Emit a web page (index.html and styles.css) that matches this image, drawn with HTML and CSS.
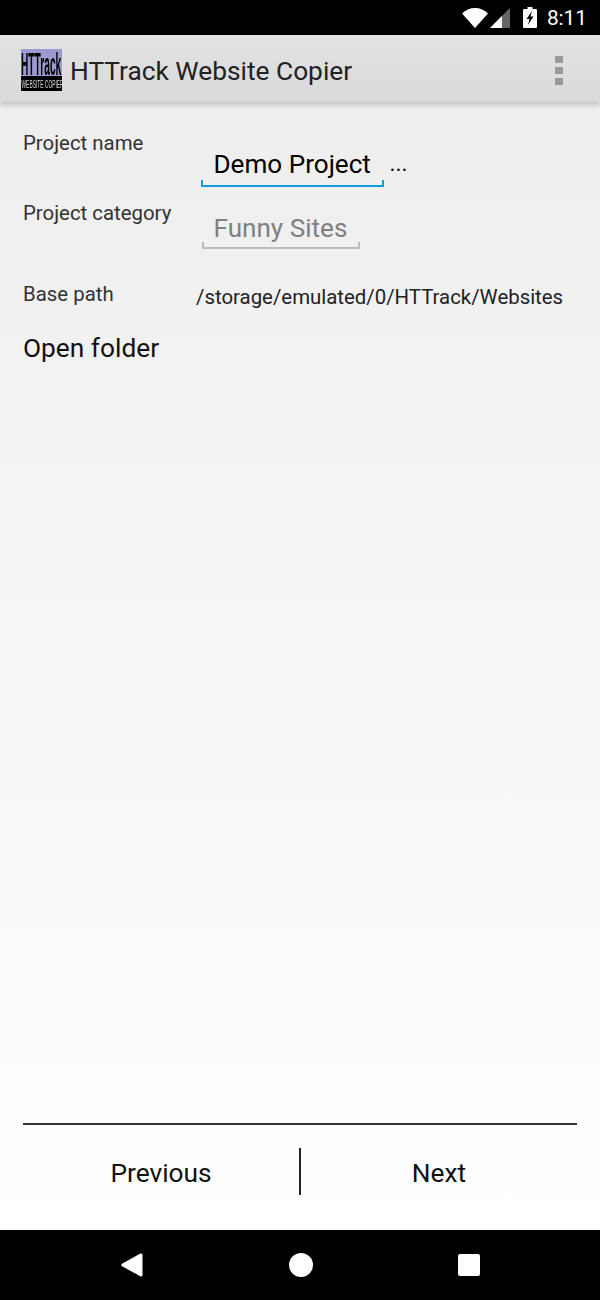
FILE: index.html
```html
<!DOCTYPE html>
<html lang="en">
<head>
    <meta charset="UTF-8">
    <meta name="viewport" content="width=device-width, initial-scale=1.0">
    <title>HTTrack Website Copier</title>
    <link rel="stylesheet" href="styles.css">
</head>
<body>
    <!-- Status bar -->
    <div class="status-bar">
        <svg class="icon-wifi" width="26" height="20" viewBox="0 0 26 20"><path d="M0 5.500C3.500 2 8 0 13 0s9.500 2 13 5.500L13 20z" fill="#fff"/></svg>
        <svg class="icon-signal" width="20" height="20" viewBox="0 0 20 20"><path d="M0 20L20 0v20z" fill="#666"/><path d="M0 20L12 8v12z" fill="#fff"/></svg>
        <svg class="icon-battery" width="14" height="21" viewBox="0 0 14 21"><path d="M4.500 0h5v2H13a1 1 0 0 1 1 1v17a1 1 0 0 1-1 1H1a1 1 0 0 1-1-1V3a1 1 0 0 1 1-1h3.500z" fill="#fff"/><path d="M9 4L3.500 12h3l-1.500 6L10.500 9.500h-3z" fill="#000"/></svg>
        <span class="clock">8:11</span>
    </div>

    <!-- Action bar -->
    <header class="action-bar">
        <svg class="logo" width="41" height="42" viewBox="0 0 41 42">
            <rect width="41" height="42" fill="#9c9ad0"/>
            <rect y="27" width="41" height="15" fill="#000"/>
            <text transform="translate(0 26) scale(1.02 3.1)" font-size="10" font-weight="bold" fill="#000">HTTrack</text>
            <text transform="translate(0.500 38.500) scale(0.98 2)" font-size="5" fill="#ddd">WEBSITE COPIER</text>
        </svg>
        <h1 class="app-title">HTTrack Website Copier</h1>
        <div class="overflow">
            <span></span>
            <span></span>
            <span></span>
        </div>
    </header>

    <main class="content">
        <div class="row row-name">
            <label class="field-label">Project name</label>
            <div class="input input-active">Demo Project</div>
            <span class="dots">...</span>
        </div>
        <div class="row row-category">
            <label class="field-label">Project category</label>
            <div class="input input-hint">Funny Sites</div>
        </div>
        <div class="row row-path">
            <label class="field-label">Base path</label>
            <span class="path">/storage/emulated/0/HTTrack/Websites</span>
        </div>
        <div class="open-folder">Open folder</div>

        <div class="bottom">
            <div class="bottom-line"></div>
            <div class="buttons">
                <div class="btn">Previous</div>
                <div class="btn-sep"></div>
                <div class="btn">Next</div>
            </div>
        </div>
    </main>

    <!-- Navigation bar -->
    <nav class="nav-bar">
        <svg width="22" height="24" viewBox="0 0 22 24"><path d="M20 0.500a1.500 1.500 0 0 1 1.500 1.500v20a1.500 1.500 0 0 1-2.200 1.300L1 13.200a1.500 1.500 0 0 1 0-2.500L19 0.700a1.500 1.500 0 0 1 1-.2z" fill="#fff"/></svg>
        <svg width="24" height="24" viewBox="0 0 24 24"><circle cx="12" cy="12" r="12" fill="#fff"/></svg>
        <svg width="22" height="22" viewBox="0 0 22 22"><rect width="22" height="22" rx="2" fill="#fff"/></svg>
    </nav>
</body>
</html>
```

FILE: styles.css
```css
* {
    box-sizing: border-box;
}
body {
    margin: 0;
    width: 600px;
    height: 1300px;
    display: flex;
    flex-direction: column;
    overflow: hidden;
    font-family: Roboto, "Liberation Sans", sans-serif;
    background-color: #fff;
}

/* Status bar */
.status-bar {
    height: 35px;
    background-color: #000;
    color: #fff;
    display: flex;
    align-items: center;
    justify-content: flex-end;
    padding-right: 13px;
}
.icon-wifi {
    margin-right: 2px;
}
.icon-signal {
    margin-right: 13px;
}
.icon-battery {
    margin-right: 10px;
}
.clock {
    font-size: 20.800px;
}

/* Action bar */
.action-bar {
    height: 67px;
    display: flex;
    align-items: center;
    padding: 3px 0 0 21px;
    background: linear-gradient(#e2e2e2, #dadada);
    box-shadow: 0 3px 5px rgba(0, 0, 0, 0.18);
    position: relative;
}
.logo {
    font-family: "Liberation Sans", sans-serif;
    filter: blur(0.4px);
}
.app-title {
    margin: 2px 0 0 8px;
    font-size: 26.300px;
    font-weight: 400;
    color: #222;
    flex: 1;
}
.overflow {
    width: 8px;
    margin-right: 37px;
    display: flex;
    flex-direction: column;
    gap: 4px;
}
.overflow span {
    height: 7px;
    background-color: #999;
}

/* Form */
.content {
    flex: 1;
    display: flex;
    flex-direction: column;
    padding: 0 23px;
    background: linear-gradient(#eeeeee, #ffffff);
}
.row {
    display: flex;
    align-items: flex-start;
}
.field-label {
    width: 178px;
    font-size: 20.400px;
    color: #333;
    line-height: 24px;
}
.row-name {
    height: 99px;
    padding-top: 29px;
}
.row-category {
    height: 81px;
}
.row-path {
    height: 51px;
}
.input {
    font-size: 26.100px;
    line-height: 30px;
    white-space: nowrap;
    border-bottom: 2px solid;
    position: relative;
}
.input::before,
.input::after {
    content: "";
    position: absolute;
    bottom: 0;
    width: 2px;
    height: 5px;
}
.input::before {
    left: 0;
}
.input::after {
    right: 0;
}
.input-active {
    height: 38px;
    margin-top: 18px;
    padding: 0 13.500px 0 12.500px;
    color: #000;
    border-bottom-color: #0f9ed8;
}
.input-active::before,
.input-active::after {
    background-color: #0f9ed8;
}
.input-hint {
    width: 158px;
    height: 36px;
    margin: 12px 0 0 1px;
    padding-left: 11.500px;
    color: #808080;
    border-bottom-color: #bbb;
}
.input-hint::before,
.input-hint::after {
    background-color: #bbb;
}
.dots {
    font-size: 23px;
    line-height: 30px;
    color: #111;
    margin: 18px 0 0 5px;
}
.path {
    font-size: 20.400px;
    color: #222;
    line-height: 24px;
    margin: 3px 0 0 -5px;
}
.open-folder {
    font-size: 26.300px;
    color: #111;
    line-height: 30px;
}
.bottom {
    margin-top: auto;
}
.bottom-line {
    height: 2px;
    background-color: #333;
}
.buttons {
    height: 105px;
    display: flex;
    align-items: center;
    padding-bottom: 12px;
}
.btn {
    flex: 1;
    text-align: center;
    font-size: 26.300px;
    color: #111;
    padding-top: 2px;
}
.btn-sep {
    width: 2px;
    height: 47px;
    background-color: #222;
}

/* Navigation bar */
.nav-bar {
    height: 70px;
    background-color: #000;
    display: flex;
    align-items: center;
    justify-content: space-between;
    padding: 0 120px 0 121px;
}
```
